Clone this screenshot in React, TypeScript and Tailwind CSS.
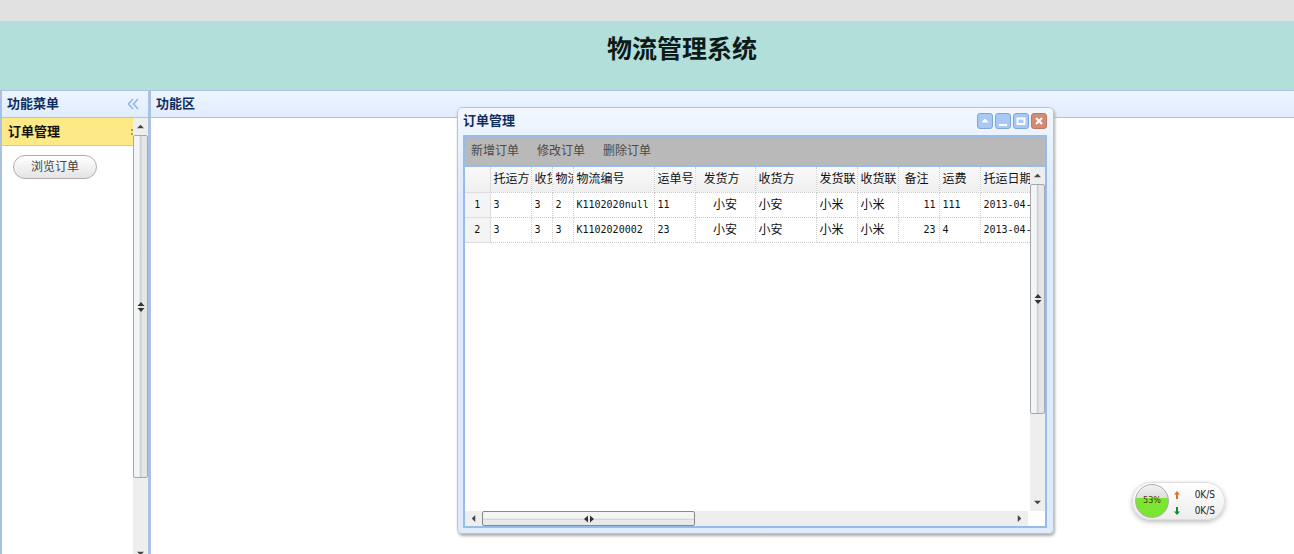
import type { ReactNode } from 'react';
import clsx from 'clsx';

const columns = [
  { title: '托运方', width: 'w-[41px]' },
  { title: '收货', width: 'w-[21px]' },
  { title: '物流', width: 'w-[21px]' },
  { title: '物流编号', width: 'w-[81px]' },
  { title: '运单号', width: 'w-[41px]' },
  { title: '发货方', width: 'w-[60px]', head: 'pl-2', cell: 'text-center' },
  { title: '收货方', width: 'w-[61px]' },
  { title: '发货联', width: 'w-[41px]' },
  { title: '收货联', width: 'w-[41px]' },
  { title: '备注', width: 'w-[41px]', head: 'pl-1.5', cell: 'text-right' },
  { title: '运费', width: 'w-[41px]' },
  { title: '托运日期', width: 'w-[61px]' },
];

const orders = [
  ['3', '3', '2', 'K1102020null', '11', '小安', '小安', '小米', '小米', '11', '111', '2013-04-'],
  ['3', '3', '3', 'K1102020002', '23', '小安', '小安', '小米', '小米', '23', '4', '2013-04-'],
];

type Direction = 'up' | 'down' | 'left' | 'right';

const arrows: Record<Direction, string> = {
  up: 'M4 2 L8 6 H0 Z',
  down: 'M4 6 L8 2 H0 Z',
  left: 'M2 4 L6 0 V8 Z',
  right: 'M6 4 L2 0 V8 Z',
};

function Arrow({ dir }: { dir: Direction }) {
  return (
    <svg viewBox="0 0 8 8" className="size-[7px] shrink-0 fill-[#444]">
      <path d={arrows[dir]} />
    </svg>
  );
}

function VerticalScrollbar({ thumb, className }: { thumb: string; className?: string }) {
  return (
    <div className={clsx('flex w-[15px] shrink-0 flex-col bg-[#eeeeee]', className)}>
      <div className="flex h-[17px] shrink-0 items-center justify-center">
        <Arrow dir="up" />
      </div>
      <div
        className={clsx(
          'flex shrink-0 items-center justify-center rounded-[2px] border border-[#a5a9af] bg-linear-to-r from-[#f3f4f5] from-40% via-[#cbd0d3] via-50% to-[#e4e6e7] to-65%',
          thumb,
        )}
      >
        <svg viewBox="0 0 8 10" className="h-[10px] w-2 fill-[#333]">
          <path d="M4 0 L7.5 4 H0.5 Z M0.5 6 H7.5 L4 10 Z" />
        </svg>
      </div>
      <div className="mt-auto flex h-[17px] shrink-0 items-center justify-center">
        <Arrow dir="down" />
      </div>
    </div>
  );
}

function HorizontalScrollbar() {
  return (
    <div className="flex h-[15px] grow bg-[#eeeeee]">
      <div className="flex w-[17px] shrink-0 items-center justify-center">
        <Arrow dir="left" />
      </div>
      <div className="flex w-[213px] items-center justify-center rounded-[2px] border border-[#85898d] bg-linear-to-b from-[#f3f4f3] from-45% via-[#cfd3d6] via-60% to-[#e8eae8] to-65%">
        <svg viewBox="0 0 10 8" className="h-2 w-[10px] fill-[#333]">
          <path d="M0 4 L4 0.5 V7.5 Z M6 0.5 L10 4 L6 7.5 Z" />
        </svg>
      </div>
      <div className="ml-auto flex w-[17px] shrink-0 items-center justify-center">
        <Arrow dir="right" />
      </div>
    </div>
  );
}

function PanelHeader({ title, children }: { title: string; children?: ReactNode }) {
  return (
    <div className="flex h-7 shrink-0 items-center justify-between border-y border-[#a9c4e6] bg-linear-to-b from-[#edf4ff] to-[#e1edfd] px-[5px]">
      <h2 className="text-[13px] leading-4 font-bold text-[#0e2d5f]">{title}</h2>
      {children}
    </div>
  );
}

function ToolButton({ label, close, children }: { label: string; close?: boolean; children: ReactNode }) {
  return (
    <button
      type="button"
      aria-label={label}
      className={clsx(
        'flex size-4 items-center justify-center rounded-[3px] border',
        close ? 'border-[#b77a6a] bg-[#d58a74]' : 'border-[#7fa6dc] bg-[#a9c8f5]',
      )}
    >
      <svg viewBox="0 0 14 14" className="size-[14px] fill-none stroke-white stroke-2">
        {children}
      </svg>
    </button>
  );
}

function OrderTable() {
  return (
    <table className="w-[576px] shrink-0 table-fixed border-collapse text-[#111]">
      <thead>
        <tr className="h-[25px] bg-linear-to-b from-[#fafafa] to-[#efefef]">
          <th className="w-[25px] border-r border-b border-[#dddddd]" />
          {columns.map((col) => (
            <th
              key={col.title}
              className={clsx(
                'overflow-hidden border-r border-b border-dotted border-[#cccccc] p-0 text-left text-xs font-normal whitespace-nowrap',
                col.width,
                col.head ?? 'pl-[3px]',
              )}
            >
              {col.title}
            </th>
          ))}
        </tr>
      </thead>
      <tbody>
        {orders.map((order, i) => (
          <tr key={i} className="h-[25px]">
            <td className="border-r border-b border-[#dddddd] bg-[#f4f4f4] p-0 text-center font-['DejaVu_Sans_Mono',monospace] text-[10px]">
              {i + 1}
            </td>
            {order.map((value, c) => (
              <td
                key={c}
                className={clsx(
                  'overflow-hidden border-r border-b border-dotted border-[#cccccc] px-[3px] py-0 whitespace-nowrap',
                  /[\u4e00-\u9fff]/.test(value)
                    ? 'text-xs'
                    : "font-['DejaVu_Sans_Mono',monospace] text-[10px]",
                  columns[c].cell,
                )}
              >
                {value}
              </td>
            ))}
          </tr>
        ))}
      </tbody>
    </table>
  );
}

function OrderWindow() {
  return (
    <section className="absolute top-[107px] left-[457px] flex h-[427px] w-[597px] flex-col rounded-[5px] border border-[#b0c7e0] bg-linear-to-b from-[#f2f7ff] to-[#deebfc] to-20% pr-1.5 pb-[5px] pl-[5px] shadow-[1px_2px_3px_#aaaaaa]">
      <div className="flex h-[27px] shrink-0 items-center justify-between pb-0.5">
        <h2 className="text-[13px] leading-4 font-bold text-[#0e2d5f]">订单管理</h2>
        <div className="flex gap-0.5">
          <ToolButton label="折叠">
            <path d="M4 8 L7 5 L10 8 Z" fill="white" strokeWidth="1" />
          </ToolButton>
          <ToolButton label="最小化">
            <path d="M3 11 H11" />
          </ToolButton>
          <ToolButton label="最大化">
            <path d="M3.5 4.5 H10.5 V10 H3.5 Z" />
          </ToolButton>
          <ToolButton label="关闭" close>
            <path d="M4 4 L10 10 M10 4 L4 10" />
          </ToolButton>
        </div>
      </div>
      <div className="flex min-h-0 grow flex-col border-2 border-[#99bbe8] bg-white">
        <div className="flex h-[30px] shrink-0 items-center gap-[18px] border-b-2 border-[#99bbe8] bg-[#b9b9b9] px-1.5 text-xs text-[#4a4a4a]">
          <button type="button">新增订单</button>
          <button type="button">修改订单</button>
          <button type="button">删除订单</button>
        </div>
        <div className="flex min-h-0 grow">
          <div className="min-w-0 grow overflow-hidden">
            <OrderTable />
          </div>
          <VerticalScrollbar thumb="h-[230px]" />
        </div>
        <div className="flex shrink-0 pr-[17px]">
          <HorizontalScrollbar />
        </div>
      </div>
    </section>
  );
}

function SpeedWidget() {
  return (
    <div className="absolute top-[482px] left-[1132px] flex h-[38px] w-[93px] items-center gap-1 rounded-full border border-[#dedede] bg-linear-to-b from-white to-[#ededed] pl-0.5 font-['DejaVu_Sans_Condensed','DejaVu_Sans',sans-serif] shadow-[0_2px_5px_#bbbbbb]">
      <div className="flex size-[34px] items-center justify-center rounded-full border border-[#a9b3a2] bg-linear-to-b from-[#f2f2f2] from-0% via-[#dddddd] via-40% to-[#7be62f] to-40% text-[9px] text-[#5a300c]">
        53%
      </div>
      <div className="flex grow flex-col pt-[3px] pr-[9px] text-[10px] leading-4 text-[#222]">
        <div className="flex items-center justify-between">
          <svg viewBox="0 0 8 8" className="size-2 fill-[#e5701e]">
            <path d="M4 0 L7 3.5 H5 V8 H3 V3.5 H1 Z" />
          </svg>
          0K/S
        </div>
        <div className="flex items-center justify-between">
          <svg viewBox="0 0 8 8" className="size-2 fill-[#158a35]">
            <path d="M4 8 L7 4.5 H5 V0 H3 V4.5 H1 Z" />
          </svg>
          0K/S
        </div>
      </div>
    </div>
  );
}

export default function App() {
  return (
    <div className="relative flex h-screen flex-col overflow-hidden bg-white font-['Liberation_Sans','Noto_Sans_CJK_SC',sans-serif]">
      <div className="h-[22px] shrink-0 border-b border-[#d0d3d2] bg-[#e1e1e1]" />
      <header className="flex h-[68px] shrink-0 justify-center bg-[#b3dfda] pt-[11px] pl-[70px]">
        <h1 className="text-[25px] leading-8 font-bold text-[#0d1a1a]">物流管理系统</h1>
      </header>

      <div className="flex min-h-0 grow">
        <aside className="flex w-[151px] shrink-0 flex-col border-r-[3px] border-l-2 border-[#a9c2e2]">
          <PanelHeader title="功能菜单">
            <button type="button" aria-label="收起菜单" className="mr-1">
              <svg viewBox="0 0 12 12" className="size-3 fill-none stroke-[#8fb8e6]">
                <path d="M6 1 L1.5 6 L6 11 M11 1 L6.5 6 L11 11" strokeWidth="1.6" />
              </svg>
            </button>
          </PanelHeader>
          <div className="flex min-h-0 grow">
            <div className="min-w-0 grow">
              <div className="flex h-7 items-center justify-between overflow-hidden border-b border-[#b9cbd9] bg-[#fde985] pl-1.5">
                <h3 className="text-[13px] leading-4 font-bold text-[#111]">订单管理</h3>
                <svg viewBox="0 0 2 8" className="h-2 w-0.5 fill-[#a39a6e]">
                  <path d="M0 1 H2 V3 H0 Z M0 5 H2 V7 H0 Z" />
                </svg>
              </div>
              <button
                type="button"
                className="mt-[9px] ml-[11px] flex h-6 w-[84px] items-center justify-center rounded-full border border-[#b5a9b0] bg-linear-to-b from-white to-[#e4e4e4] text-xs text-[#444]"
              >
                浏览订单
              </button>
            </div>
            <VerticalScrollbar thumb="h-[343px]" className="-mb-2" />
          </div>
        </aside>
        <main className="min-w-0 grow">
          <PanelHeader title="功能区" />
        </main>
      </div>

      <OrderWindow />
      <SpeedWidget />
    </div>
  );
}
